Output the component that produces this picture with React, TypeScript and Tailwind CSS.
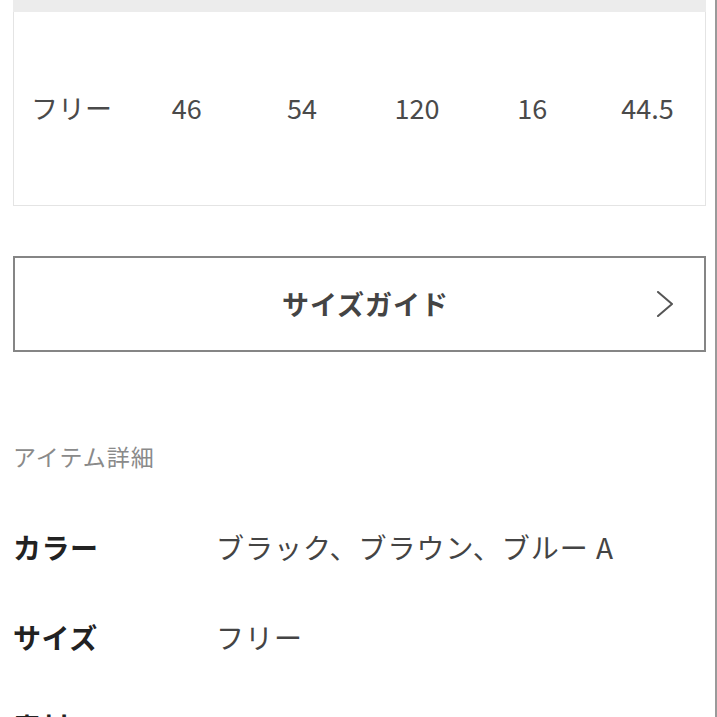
const sizeRow = ['フリー', '46', '54', '120', '16', '44.5'];

const details = [
  { label: 'カラー', value: 'ブラック、ブラウン、ブルー A' },
  { label: 'サイズ', value: 'フリー' },
  { label: '素材', value: 'コットン100%' },
];

export default function App() {
  return (
    <div
      className="w-[717px] h-[717px] overflow-hidden bg-white border-r-2 border-[#9a9a9a]"
      style={{ fontFamily: '"Noto Sans CJK JP", "Noto Sans", sans-serif' }}
    >
      <div className="pl-[13px] pr-[9px]">
        {/* Size table */}
        <div className="h-[12px] bg-[#ececec]" />
        <div className="h-[194px] border-x border-b border-[#e4e4e4] grid grid-cols-6 items-center">
          {sizeRow.map((cell, i) => (
            <div key={i} className="text-center text-[27px] text-[#4a4a4a] leading-none -mt-[3px]">
              {cell}
            </div>
          ))}
        </div>

        {/* Size guide button */}
        <button className="mt-[50px] w-full h-[96px] border-2 border-[#858585] flex items-center justify-center relative pl-[12px]">
          <span className="text-[27px] font-bold text-[#444] tracking-[1px]">サイズガイド</span>
          <svg
            className="absolute right-[30px] top-1/2 -translate-y-1/2"
            width="18"
            height="26"
            viewBox="0 0 18 26"
            fill="none"
            stroke="#555"
            strokeWidth="2"
            strokeLinecap="round"
            strokeLinejoin="round"
          >
            <polyline points="2,1 16,13 2,25" />
          </svg>
        </button>

        {/* Item details */}
        <div className="mt-[88px] text-[23px] text-[#8a8a8a] leading-[32px] tracking-[1px]">アイテム詳細</div>
        <div className="mt-[30px]">
          {details.map((d) => (
            <div key={d.label} className="flex items-center h-[90px]">
              <div className="w-[203px] text-[28px] font-bold text-[#222] tracking-[0.5px]">{d.label}</div>
              <div className="text-[28px] text-[#444] tracking-[1px]">{d.value}</div>
            </div>
          ))}
        </div>
      </div>
    </div>
  );
}
